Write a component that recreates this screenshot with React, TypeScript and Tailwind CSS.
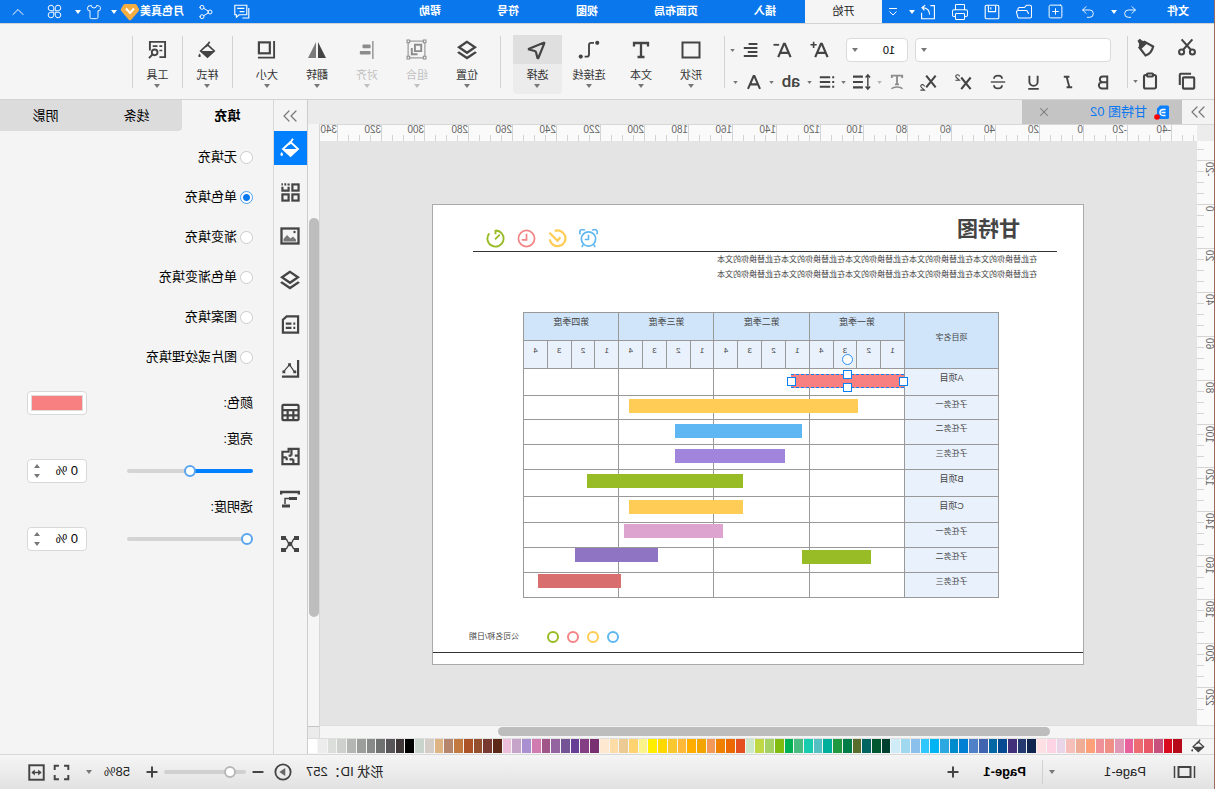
import type { ReactNode } from "react";
import {
  ChevronUp,
  ChevronsRight,
  Clipboard,
  FolderOpen,
  MousePointer2,
  Plus,
  Minus,
  Printer,
  Redo2,
  Share2,
  Shirt,
  SquarePlus,
  Undo2,
  X,
} from "lucide-react";

const palette = [
  "#b60a1a", "#d90a20", "#c8507c", "#e85866", "#ec6c72", "#e8609c", "#e098b4", "#ef8f86", "#f09098", "#ffa078",
  "#eead94", "#f6bfba", "#ead4e8", "#fdd4e4", "#fee0e4", "#102450", "#263a72", "#42307a", "#064a94", "#0468a4",
  "#4064b0", "#5080c8", "#0080d4", "#008ccc", "#2ca8e0", "#00b4f4", "#30c8fc", "#8cc0ec", "#a0d8f0", "#d0ecf8",
  "#004030", "#005830", "#006460", "#586c2c", "#007c48", "#209840", "#00ae9c", "#54c0c4", "#18ccb0", "#48bc80",
  "#00b054", "#80bc10", "#a4d064", "#c0d844", "#cce8c8", "#e45020", "#ec6800", "#f08000", "#f29858", "#f2a400",
  "#ffae00", "#ffb838", "#f9c830", "#ffd800", "#ffee00", "#fcf48a", "#ffd470", "#ecca94", "#fedca8", "#fee8d0",
  "#783070", "#843e84", "#663e96", "#745494", "#9464a0", "#a05688", "#d07cb0", "#aa90d0", "#c6a4ca", "#ecc0dc",
  "#5c2818", "#783a30", "#94502c", "#ac5428", "#c27a40", "#b6866c", "#deb484", "#d4ccc6", "#c8d4cc", "#000000",
  "#403838", "#585658", "#707272", "#888a8a", "#9c9e9c", "#b4b6b4", "#ced0ce", "#dcdedc", "#ececec", "#ffffff",
];

const quarters = ["第一季度", "第二季度", "第三季度", "第四季度"];

const tasks = [
  { name: "A项目", main: true, h: 27 },
  { name: "子任务一", main: false, h: 24 },
  { name: "子任务二", main: false, h: 25 },
  { name: "子任务三", main: false, h: 25 },
  { name: "B项目", main: true, h: 27 },
  { name: "C项目", main: true, h: 26 },
  { name: "子任务一", main: false, h: 25 },
  { name: "子任务二", main: false, h: 25 },
  { name: "子任务三", main: false, h: 25 },
];

// left / top / width are measured from the table's corner
const bars = [
  { left: 141, top: 87, width: 229, color: "#ffcc56" },
  { left: 197, top: 112, width: 127, color: "#5eb6f2" },
  { left: 214, top: 137, width: 110, color: "#a184dc" },
  { left: 256, top: 162, width: 156, color: "#98bc26" },
  { left: 256, top: 188, width: 114, color: "#ffcc56" },
  { left: 276, top: 212, width: 99, color: "#dca4ce" },
  { left: 128, top: 238, width: 69, color: "#98bc26" },
  { left: 341, top: 236, width: 83, color: "#8e74c2" },
  { left: 378, top: 262, width: 83, color: "#d86f6e" },
];

const fillModes = ["无填充", "单色填充", "渐变填充", "单色渐变填充", "图案填充", "图片或纹理填充"];

function Svg({ size = 20, children, className = "" }: { size?: number; children: ReactNode; className?: string }) {
  return (
    <svg width={size} height={size} viewBox="0 0 20 20" fill="none" stroke="currentColor" strokeWidth="2.3" className={className} aria-hidden="true">
      {children}
    </svg>
  );
}

function Caret({ className = "" }: { className?: string }) {
  return (
    <svg width="6" height="4" viewBox="0 0 6 4" className={`shrink-0 ${className}`} aria-hidden="true">
      <path d="M0 0h6L3 4z" fill="currentColor" />
    </svg>
  );
}

function Bucket({ size = 20 }: { size?: number }) {
  return (
    <Svg size={size}>
      <path d="M9.5 4 17 11l-7.500 7L2 11z" strokeWidth="1.900" />
      <path d="M2 11h15l-7.500 7z" fill="currentColor" stroke="none" />
      <path d="M7 .8l4 5.700" strokeWidth="1.900" />
      <path d="M18.300 14c1 1.500 1.300 1.900 1.300 2.600a1.300 1.300 0 0 1-2.600 0c0-.7.3-1.100 1.300-2.600z" fill="currentColor" stroke="none" />
    </Svg>
  );
}

function LayersIcon({ size = 20 }: { size?: number }) {
  return (
    <Svg size={size}>
      <path d="M10 1.800 18 7.300 10 12.800 2 7.300z" />
      <path d="M2.800 12 2 12.700l8 5.300 8-5.300-.8-.7" />
    </Svg>
  );
}

function TitleButton({ label, className, children }: { label: string; className: string; children: ReactNode }) {
  return (
    <button aria-label={label} className={`flex h-full items-center justify-center ${className}`}>
      {children}
    </button>
  );
}

function TitleBar() {
  return (
    <header className="flex h-[23px] shrink-0 items-center bg-[#0a77ec] text-[11px] text-white">
      <button className="w-[72px] font-bold">文件</button>
      <TitleButton label="撤销" className="w-6"><Undo2 size={16} strokeWidth={1.4} /></TitleButton>
      <TitleButton label="撤销历史" className="w-2"><Caret /></TitleButton>
      <TitleButton label="重做" className="ml-1.5 w-8"><Redo2 size={16} strokeWidth={1.4} /></TitleButton>
      <TitleButton label="新建" className="w-8"><SquarePlus size={17} strokeWidth={1.4} /></TitleButton>
      <TitleButton label="打开" className="w-8"><FolderOpen size={18} strokeWidth={1.4} /></TitleButton>
      <TitleButton label="保存" className="w-8">
        <Svg size={16}>
          <rect x="1.500" y="1.500" width="17" height="17" rx="1.500" strokeWidth="1.400" />
          <path d="M5.500 2v7.500h9V2M11.500 4v3" strokeWidth="1.400" />
        </Svg>
      </TitleButton>
      <TitleButton label="打印" className="w-8"><Printer size={18} strokeWidth={1.4} /></TitleButton>
      <TitleButton label="导出" className="w-8">
        <Svg size={16}>
          <path d="M7 2H2v16.500h16V11" strokeWidth="1.400" />
          <path d="M8 13c0-5 3-8 9-8.500M13.500 1.500 17.500 4.500 14.500 8" strokeWidth="1.400" />
        </Svg>
      </TitleButton>
      <TitleButton label="导出选项" className="-ml-1 w-2"><Caret /></TitleButton>
      <TitleButton label="自定义快速访问" className="w-[26px] pl-1">
        <Svg size={10}>
          <path d="M2 3h16M3 9l7 7 7-7" strokeWidth="2" />
        </Svg>
      </TitleButton>
      <nav className="flex h-full">
        <button className="w-[77px] bg-[#f5f5f5] text-[#222]">开始</button>
        <button className="w-20 font-bold">插入</button>
        <button className="w-[98px] font-bold">页面布局</button>
        <button className="w-20 font-bold">视图</button>
        <button className="w-[78px] font-bold">符号</button>
        <button className="w-[78px] font-bold">帮助</button>
      </nav>
      <div className="ml-auto flex h-full items-center">
        <TitleButton label="评论" className="w-9">
          <Svg size={16}>
            <path d="M4 1.500h15v12H17v3l-3.500-3H4zM7 5.500h9M7 9.500h6" strokeWidth="1.400" />
            <path d="M1.500 5v12.500h8" strokeWidth="1.400" />
          </Svg>
        </TitleButton>
        <TitleButton label="分享" className="w-9"><Share2 size={16} strokeWidth={1.4} /></TitleButton>
        <span className="pl-1 font-bold">月色真美</span>
        <svg width="20" height="18" viewBox="0 0 20 18" aria-hidden="true">
          <path d="M5 1h10a2 2 0 0 1 1.600.8L19 6a2 2 0 0 1-.2 2L11.500 16.500a2 2 0 0 1-3 0L1.200 8A2 2 0 0 1 1 6l2.400-4.200A2 2 0 0 1 5 1z" fill="#f4ad42" />
          <path d="M6 5.500 10 10l4-4.500" fill="none" stroke="#fff" strokeWidth="2" />
        </svg>
        <TitleButton label="账户菜单" className="ml-0.5 w-2"><Caret /></TitleButton>
        <TitleButton label="皮肤" className="ml-1 w-6"><Shirt size={16} strokeWidth={1.4} /></TitleButton>
        <TitleButton label="皮肤选项" className="w-2"><Caret /></TitleButton>
        <TitleButton label="应用" className="w-[38px]">
          <Svg size={15}>
            <path d="M9 9H5a3.700 3.700 0 1 1 4-4zM11 9V5a3.700 3.700 0 1 1 4 4zM9 11v4a3.700 3.700 0 1 1-4-4zM11 11h4a3.700 3.700 0 1 1-4 4z" strokeWidth="1.300" />
          </Svg>
        </TitleButton>
        <TitleButton label="收起功能区" className="w-9"><ChevronUp size={20} strokeWidth={1.2} /></TitleButton>
      </div>
    </header>
  );
}

function Divider() {
  return <div className="mt-3 h-[52px] w-px shrink-0 bg-[#d2d2d2]" />;
}

function IconButton({ label, className, children }: { label: string; className: string; children: ReactNode }) {
  return (
    <button aria-label={label} title={label} className={`flex h-full shrink-0 items-center justify-center ${className}`}>
      {children}
    </button>
  );
}

function RibbonTool({ label, width = "w-[50px]", active, disabled, children }: { label: string; width?: string; active?: boolean; disabled?: boolean; children: ReactNode }) {
  return (
    <button
      disabled={disabled}
      className={`mt-[11px] flex h-[59px] shrink-0 flex-col items-center rounded-sm text-[11px] leading-4 ${width} ${active ? "bg-[#ececec]" : ""} ${disabled ? "text-[#c0c0c0]" : "text-[#333]"}`}
    >
      <span className={`flex h-[29px] w-full items-center justify-center ${active ? "bg-[#dfdfdf]" : ""} ${disabled ? "text-[#8c8c8c]" : "text-[#444]"}`}>{children}</span>
      <span className="mt-[3px]">{label}</span>
      <Caret className={disabled ? "mt-px text-[#c0c0c0]" : "mt-px text-[#777]"} />
    </button>
  );
}

function Ribbon() {
  return (
    <div className="flex h-[77px] shrink-0 items-start border-y border-[#d2d2d2] bg-[#f5f5f5] text-[#444]">
      <div className="w-[86px] pt-1.5">
        <div className="flex h-[34px]">
          <IconButton label="剪切" className="w-[54px]">
            <Svg size={18}>
              <circle cx="4" cy="15.500" r="2.800" />
              <circle cx="16" cy="15.500" r="2.800" />
              <path d="M5.500 13.300 16 1.500M14.500 13.300 4 1.500" />
            </Svg>
          </IconButton>
          <IconButton label="格式刷" className="w-[26px]">
            <Svg size={19}>
              <path d="M3 9 12 4l5.500 6L11 18.500C6.500 17 4 13.500 3 9z" />
              <path d="M9 5.500 12.500 3.200l2-.2L17 .8 19.500 3l-1.700 3 .2 2.500-2.500 3z" fill="currentColor" stroke="none" />
            </Svg>
          </IconButton>
        </div>
        <div className="flex h-[34px]">
          <IconButton label="复制" className="w-[54px]">
            <Svg size={18}>
              <rect x="2" y="6" width="12.500" height="12.500" rx="1" />
              <path d="M5.500 2H17a1 1 0 0 1 1 1v11.500" />
            </Svg>
          </IconButton>
          <IconButton label="粘贴" className="w-5"><Clipboard size={18} strokeWidth={2.8} /></IconButton>
          <IconButton label="粘贴选项" className="w-2 text-[#777]"><Caret className="h-[3px] w-[5px]" /></IconButton>
        </div>
      </div>
      <Divider />

      <div className="w-[402px] pt-2.5">
        <div className="flex h-8 items-center">
          <div className="relative ml-4 w-[196px]">
            <select aria-label="字体" className="block h-6 w-full appearance-none rounded-sm border border-[#dadada] bg-white" />
            <Caret className="pointer-events-none absolute top-[10px] right-1.5 text-[#777]" />
          </div>
          <div className="relative mr-[7px] ml-[7px] w-[62px]">
            <select aria-label="字号" defaultValue="10" className="block h-6 w-full appearance-none rounded-sm border border-[#dadada] bg-white pl-3 text-[11px] text-black">
              <option>10</option>
            </select>
            <Caret className="pointer-events-none absolute top-[10px] right-1.5 text-[#777]" />
          </div>
          <IconButton label="增大字号" className="w-[38px]">
            <Svg size={19}>
              <path d="M1.500 17 7.500 3h1L14.500 17M4 12.500h8" />
              <path d="M13 4h6.500M16.200 .8v6.500" strokeWidth="1.700" />
            </Svg>
          </IconButton>
          <IconButton label="减小字号" className="w-9">
            <Svg size={19}>
              <path d="M1.500 17 7.500 3h1L14.500 17M4 12.500h8" />
              <path d="M13.500 4h6" strokeWidth="1.900" />
            </Svg>
          </IconButton>
          <IconButton label="对齐文本" className="w-7">
            <Svg size={16}>
              <path d="M2 2.500h11M2 7.500h17M2 12.500h12M2 17.500h17" strokeWidth="2.400" />
            </Svg>
          </IconButton>
          <IconButton label="对齐选项" className="w-2 text-[#777]"><Caret className="h-[3px] w-[5px]" /></IconButton>
        </div>
        <div className="flex h-8 items-center pl-1.5 text-[17px]">
          <IconButton label="粗体" className="w-[35px]">
            <Svg size={15}>
              <path d="M5 2h6a3.800 3.800 0 0 1 0 7.600H5zM5 9.600h7a4.200 4.200 0 0 1 0 8.400H5z" strokeWidth="2.600" />
            </Svg>
          </IconButton>
          <IconButton label="斜体" className="w-[35px]">
            <Svg size={14}>
              <path d="M8 2.500h8M4 17.500h8M12 2.500 8 17.500" strokeWidth="2.700" />
            </Svg>
          </IconButton>
          <IconButton label="下划线" className="w-[35px]">
            <Svg size={15}>
              <path d="M4.500 1v8a5.500 5.500 0 0 0 11 0V1M3 18.500h14" strokeWidth="2.500" />
            </Svg>
          </IconButton>
          <IconButton label="删除线" className="w-[35px]">
            <Svg size={16}>
              <path d="M15 6c0-2.500-2-4-5-4S5 3.500 5 6M5 14c0 2.500 2 4 5 4s5-1.500 5-4" />
              <path d="M1 10h18" strokeWidth="1.700" />
            </Svg>
          </IconButton>
          <IconButton label="上标" className="w-[35px]">
            <Svg size={18}>
              <path d="M1.500 5 12 18M12 5 1.500 18" />
              <path d="M14 4c0-3 4.500-2.500 4 0-.2 1-2 2-4 4h4.500" strokeWidth="1.200" />
            </Svg>
          </IconButton>
          <IconButton label="下标" className="w-[35px]">
            <Svg size={18}>
              <path d="M1.500 3 12 16M12 3 1.500 16" />
              <path d="M14 15c0-3 4.500-2.500 4 0-.2 1-2 2-4 4h4.500" strokeWidth="1.200" />
            </Svg>
          </IconButton>
          <IconButton label="文本路径" className="w-7 text-[#8c8c8c]">
            <Svg size={16}>
              <path d="M3.500 5V2h13v3M10 2v11M7.500 13h5" />
              <path d="M3 18.500c3-3 11-3 14 0" strokeWidth="1.700" />
            </Svg>
          </IconButton>
          <IconButton label="文本路径选项" className="w-1.5 text-[#b4b4b4]"><Caret className="h-[3px] w-[5px]" /></IconButton>
          <IconButton label="行距" className="w-[30px]">
            <Svg size={18}>
              <path d="M9 4h11M9 10h11M9 16h11" />
              <path d="M3.500 2v16M1 5l2.500-3L6 5M1 15l2.500 3L6 15" strokeWidth="1.600" />
            </Svg>
          </IconButton>
          <IconButton label="行距选项" className="w-1.5 text-[#777]"><Caret className="h-[3px] w-[5px]" /></IconButton>
          <IconButton label="项目符号" className="w-7">
            <Svg size={16}>
              <path d="M6 4h13M6 10h13M6 16h13" strokeWidth="2.400" />
              <path d="M1 4h2.500M1 10h2.500M1 16h2.500" strokeWidth="2.400" />
            </Svg>
          </IconButton>
          <IconButton label="项目符号选项" className="w-1.5 text-[#777]"><Caret className="h-[3px] w-[5px]" /></IconButton>
          <IconButton label="文本突出显示" className="w-8 font-['Roboto',sans-serif] font-medium">ab</IconButton>
          <IconButton label="突出显示选项" className="w-1.5 text-[#777]"><Caret className="h-[3px] w-[5px]" /></IconButton>
          <IconButton label="字体颜色" className="w-[30px]">
            <Svg size={16}>
              <path d="M2.500 18.500 9.500 2.500h1l7 16M5.500 13h9" strokeWidth="2.600" />
            </Svg>
          </IconButton>
          <IconButton label="字体颜色选项" className="w-1.5 text-[#777]"><Caret className="h-[3px] w-[5px]" /></IconButton>
        </div>
      </div>
      <Divider />

      <div className="flex w-[223px] pl-2">
        <RibbonTool label="形状">
          <Svg><rect x="1.500" y="2.500" width="17" height="15" strokeWidth="2" /></Svg>
        </RibbonTool>
        <RibbonTool label="文本">
          <Svg><path d="M3 6.500V3h14v3.500M10 3v14M6.500 17h7" /></Svg>
        </RibbonTool>
        <RibbonTool label="连接线" width="w-[54px]">
          <Svg size={22}>
            <circle cx="2.500" cy="3.500" r="1.900" fill="currentColor" stroke="none" />
            <circle cx="17.500" cy="16" r="1.900" fill="currentColor" stroke="none" />
            <path d="M5.500 3.500H8a2 2 0 0 1 2 2V14a2 2 0 0 0 2 2h2" strokeWidth="1.700" />
          </Svg>
        </RibbonTool>
        <RibbonTool label="选择" width="w-[49px]" active>
          <MousePointer2 size={22} strokeWidth={2.4} />
        </RibbonTool>
      </div>
      <Divider />

      <div className="flex w-[267px] pl-2">
        <RibbonTool label="位置"><LayersIcon /></RibbonTool>
        <RibbonTool label="组合" disabled>
          <Svg size={21}>
            <rect x="2" y="2" width="16" height="16" strokeWidth="1" />
            <path d="M1 1h2.500v2.500H1zM16.500 1H19v2.500h-2.500zM1 16.500h2.500V19H1zM16.500 16.500H19V19h-2.500z" strokeWidth="1" fill="#f5f5f5" />
            <path d="M8.500 5.500h6v6h-6zM5.500 8.500v6H11" strokeWidth="1.800" className="origin-center -scale-x-100" />
          </Svg>
        </RibbonTool>
        <RibbonTool label="对齐" disabled>
          <Svg size={18}>
            <path d="M3.500 0v20" strokeWidth="1.500" />
            <rect x="6" y="4" width="9" height="4" rx="1" fill="currentColor" stroke="none" />
            <rect x="6" y="11" width="12" height="4" rx="1" fill="currentColor" stroke="none" />
          </Svg>
        </RibbonTool>
        <RibbonTool label="翻转">
          <Svg>
            <path d="M9 2v16H1z" fill="currentColor" stroke="none" />
            <path d="M11 2v16h8z" fill="#7a7a7a" stroke="none" />
          </Svg>
        </RibbonTool>
        <RibbonTool label="大小">
          <Svg size={19}>
            <path d="M2 1v17.500h17" strokeWidth="2" />
            <rect x="6.500" y="2.500" width="11.500" height="11.500" />
          </Svg>
        </RibbonTool>
      </div>
      <Divider />
      <RibbonTool label="样式" width="w-[49px]"><Bucket size={18} /></RibbonTool>
      <Divider />
      <RibbonTool label="工具" width="w-[49px]">
        <Svg size={19}>
          <path d="M8 18H2V2h16v9" strokeWidth="2" />
          <path d="M5 6.500h3M10 6.500h5M5 11h3" strokeWidth="1.700" />
          <circle cx="13" cy="13" r="3" strokeWidth="2" />
          <path d="M15 15l4 4" strokeWidth="2" />
        </Svg>
      </RibbonTool>
      <Divider />
    </div>
  );
}

// 20 units of the drawing take 44px on both rulers
const PX_PER_UNIT = 2.195;

function HorizontalRuler() {
  const ticks = Array.from({ length: 79 }, (_, i) => (i - 10) * 5);
  return (
    <svg className="h-[17px] w-full bg-[#fafafa] font-['Liberation_Sans',sans-serif]" aria-hidden="true">
      {ticks.map((v) => {
        const x = Math.round(113 + v * PX_PER_UNIT);
        const major = v % 20 === 0;
        return (
          <g key={v}>
            <rect x={x} y={major ? 0 : 10} width="1" height={major ? 17 : 7} fill="#d4d4d4" />
            {major && <text x={x + 1} y="8" fontSize="10" fill="#666">{v}</text>}
          </g>
        );
      })}
    </svg>
  );
}

function VerticalRuler() {
  const ticks = Array.from({ length: 52 }, (_, i) => (i - 5) * 5);
  return (
    <svg className="block h-full w-[17px] shrink-0 bg-[#fafafa] font-['Liberation_Sans',sans-serif]" aria-hidden="true">
      {ticks.map((v) => {
        const y = Math.round(63 + v * PX_PER_UNIT);
        const major = v % 20 === 0;
        return (
          <g key={v}>
            <rect x={major ? 0 : 10} y={y} width={major ? 17 : 7} height="1" fill="#d4d4d4" />
            {major && (
              <text transform={`translate(8 ${y + 2}) rotate(-90)`} textAnchor="end" fontSize="10" fill="#666">{v}</text>
            )}
          </g>
        );
      })}
    </svg>
  );
}

function GanttTable() {
  return (
    <div className="relative w-[476px]">
      <table className="w-full table-fixed border-collapse border border-[#a4a4a4] text-center text-[#444]">
        <colgroup>
          <col className="w-[94px]" />
          {Array.from({ length: 16 }, (_, i) => <col key={i} />)}
        </colgroup>
        <thead>
          <tr className="h-7 bg-[#d0e5fa]">
            <th rowSpan={2} className="border border-[#999] p-0 pb-1.5 text-[8px] leading-3 font-normal">项目名字</th>
            {quarters.map((q) => (
              <th key={q} colSpan={4} className="border border-[#999] p-0 pt-[3px] align-top text-[9px] leading-3 font-normal">{q}</th>
            ))}
          </tr>
          <tr className="h-7 bg-[#e9f1fc]">
            {Array.from({ length: 16 }, (_, i) => (
              <th key={i} className="border border-[#999] p-0 pt-1 align-top text-[8px] leading-3 font-normal">{(i % 4) + 1}</th>
            ))}
          </tr>
        </thead>
        <tbody>
          {tasks.map((t, i) => (
            <tr key={i} style={{ height: t.h }}>
              <th className={`border border-[#999] bg-[#e9f1fc] p-0 pt-[3px] align-top leading-3 font-normal ${t.main ? "text-[9px]" : "text-[8px]"}`}>{t.name}</th>
              {quarters.map((q) => <td key={q} colSpan={4} className="border border-[#999] p-0" />)}
            </tr>
          ))}
        </tbody>
      </table>
      {bars.map((b, i) => (
        <div key={i} className="absolute h-3.5" style={{ left: b.left, top: b.top, width: b.width, background: b.color }} />
      ))}
      {/* selected bar with its resize and rotate handles */}
      <div className="absolute top-[62px] left-[95px] h-3.5 w-[113px] border-y border-dashed border-[#0a80f5] bg-[#f88080]">
        <i className="absolute -top-[21px] left-[51px] size-[11px] rounded-full border border-[#2a8ff5] bg-white" />
        <i className="absolute -top-[5px] left-[52px] size-[9px] border border-[#0a80f5] bg-white" />
        <i className="absolute top-2 left-[52px] size-[9px] border border-[#0a80f5] bg-white" />
        <i className="absolute top-0.5 -left-1 size-[9px] border border-[#0a80f5] bg-white" />
        <i className="absolute top-0.5 -right-1 size-[9px] border border-[#0a80f5] bg-white" />
      </div>
    </div>
  );
}

function Page() {
  return (
    <div className="absolute top-[63px] left-[113px] flex h-[461px] w-[652px] flex-col border border-[#aaa] bg-white text-[#444]">
      <div className="mr-10 ml-[26px] flex h-[47px] items-end justify-between border-b border-[#333] pr-[13px] pl-[37px]">
        <h1 className="mb-2 text-[21px] leading-7 font-bold">甘特图</h1>
        <div className="mb-[3px] flex gap-3">
          <Svg size={19} className="text-[#5eb6f2]">
            <circle cx="10" cy="10.500" r="7.500" strokeWidth="1.800" />
            <path d="M10 6v5h4M1.500 5.500a3 3 0 0 1 4.500-4M18.500 5.500a3 3 0 0 0-4.500-4M4.500 16.500 3 19M15.500 16.500 17 19" strokeWidth="1.700" />
          </Svg>
          <Svg size={19} className="text-[#ffcc56]">
            <path d="M13 2A8.300 8.300 0 1 0 18.200 11" strokeWidth="2.400" />
            <path d="M7 8.500 10 12.500 18.500 4" strokeWidth="2.400" />
          </Svg>
          <Svg size={19} className="text-[#f48484]">
            <circle cx="10" cy="10" r="8.500" strokeWidth="1.800" />
            <path d="M10 5v6.500h5" strokeWidth="1.800" />
          </Svg>
          <Svg size={19} className="text-[#98bc26]">
            <path d="M10 1v4.500M10 1.500A8.500 8.500 0 1 0 16.500 4.500M10.500 11 5.500 6" strokeWidth="2" />
          </Svg>
        </div>
      </div>
      <div className="ml-[46px] text-[8px] leading-[15px]">
        <p>在此替换你的文本在此替换你的文本在此替换你的文本在此替换你的文本在此替换你的文本</p>
        <p>在此替换你的文本在此替换你的文本在此替换你的文本在此替换你的文本在此替换你的文本</p>
      </div>
      <div className="mt-[30px] ml-[84px]">
        <GanttTable />
      </div>
      <div className="mt-auto mb-[11px] flex h-7 items-center justify-end border-b border-[#333] pr-9 pb-1 text-[8px]">
        <div className="mr-7 flex gap-2">
          <i className="size-3 rounded-full border-2 border-[#5eb6f2]" />
          <i className="size-3 rounded-full border-2 border-[#ffcc56]" />
          <i className="size-3 rounded-full border-2 border-[#f48484]" />
          <i className="size-3 rounded-full border-2 border-[#98bc26]" />
        </div>
        公司名称/日期
      </div>
    </div>
  );
}

function Workspace() {
  return (
    <main className="flex min-w-0 flex-1 flex-col">
      <div className="flex h-6 shrink-0 items-center bg-[#ebebeb]">
        <button aria-label="展开符号库" className="flex h-full w-8 items-center justify-center bg-[#f3f3f3] text-[#777]">
          <ChevronsRight size={24} strokeWidth={1.2} />
        </button>
        <div className="flex h-full w-40 items-center bg-[#c4c4c4] pl-[13px]">
          <svg width="15" height="15" viewBox="0 0 15 15" aria-hidden="true">
            <path d="M0 2a1.500 1.500 0 0 1 1.500-1.500H9L12 3.500V13a1 1 0 0 1-1 1H1.500A1.500 1.500 0 0 1 0 12.500z" fill="#0a80ff" />
            <path d="M3.500 4.500h2.500a2.800 2.800 0 0 1 0 6H3.500M3.500 7.500h4" fill="none" stroke="#fff" strokeWidth="1.400" />
            <circle cx="12" cy="12" r="2.800" fill="#f00" />
          </svg>
          <span className="ml-[7px] text-[13px] whitespace-nowrap text-[#0a78f0]">甘特图 02</span>
          <button aria-label="关闭" className="mr-[15px] ml-auto text-[#777]"><X size={14} strokeWidth={1.8} /></button>
        </div>
      </div>
      <div className="flex min-h-0 flex-1">
        <div className="flex shrink-0 flex-col border-t border-[#d8d8d8]">
          <div className="h-4 w-[17px] shrink-0 bg-[#ececec]" />
          <div className="min-h-0 flex-1 overflow-hidden"><VerticalRuler /></div>
          <div className="h-[13px] shrink-0 border-t border-[#dedede] bg-[#f5f5f5]" />
        </div>
        <div className="flex min-w-0 flex-1 flex-col border-t border-[#d8d8d8]">
          <HorizontalRuler />
          <div className="relative -mt-px min-h-0 flex-1 overflow-hidden bg-[#e4e4e4]">
            <Page />
          </div>
          <div className="h-[13px] shrink-0 border-t border-[#dedede] bg-[#f5f5f5] pt-px pl-[147px]">
            <div className="h-[9px] w-[552px] rounded-full bg-[#bdbdbd]" />
          </div>
        </div>
        <div className="flex w-3 shrink-0 flex-col border-l border-[#d8d8d8] bg-[#f5f5f5] pt-[94px]">
          <div className="h-[399px] w-[10px] rounded-full bg-[#bdbdbd]" />
          <div className="mt-auto h-3 border-t border-[#c4c4c4] bg-[#ebebeb]" />
        </div>
      </div>
      <div className="flex h-4 shrink-0 items-start border-t border-[#dedede] bg-[#f5f5f5] text-[#444]">
        <button aria-label="填充颜色" className="flex w-8 justify-center"><Bucket size={14} /></button>
        <div className="flex h-3.5 flex-1 gap-px pr-px">
          {palette.map((c) => (
            <button key={c} aria-label={c} className="flex-1" style={{ background: c }} />
          ))}
        </div>
      </div>
    </main>
  );
}

const strip: { label: string; icon: ReactNode }[] = [
  { label: "填充", icon: <Bucket size={20} /> },
  {
    label: "符号库",
    icon: (
      <Svg size={19}>
        <rect x="1.500" y="1.500" width="6.500" height="6.500" />
        <path d="M12 4v4h6.500V4M12 .5v2M14.500 1.500h2M18 1.500h1.500" />
        <rect x="1.500" y="12" width="6.500" height="6.500" />
        <rect x="12" y="12" width="6.500" height="6.500" />
      </Svg>
    ),
  },
  {
    label: "图片",
    icon: (
      <Svg size={20}>
        <rect x="1.500" y="2.500" width="17" height="15" />
        <path d="M4 15.500v-2l3-3 2.500 2L13 9l3.500 4v2.500z" fill="#777" stroke="none" />
        <circle cx="5.500" cy="6" r="1.200" fill="currentColor" stroke="none" />
      </Svg>
    ),
  },
  { label: "图层", icon: <LayersIcon size={20} /> },
  {
    label: "页面",
    icon: (
      <Svg size={19}>
        <path d="M2 1.500h12L18 5v13.500H2z" />
        <path d="M5 9h2M9 9h6M5 13.500h2M9 13.500h6" />
      </Svg>
    ),
  },
  {
    label: "图表",
    icon: (
      <Svg size={19}>
        <path d="M2 1v17.500h17" />
        <path d="M5.500 14 11 6l6.500 7.500" strokeWidth="1.300" />
        <path d="M4 12h3v3H4zM9.500 4.500h3v3h-3zM15.500 12h3v3h-3z" fill="currentColor" stroke="none" />
      </Svg>
    ),
  },
  {
    label: "表格",
    icon: (
      <Svg size={19}>
        <rect x="1.500" y="2" width="17" height="16" rx="1" />
        <path d="M1.500 7.500h17M1.500 13h17M7 7.500V18M13 7.500V18" />
      </Svg>
    ),
  },
  {
    label: "平面图",
    icon: (
      <Svg size={19}>
        <path d="M1.500 2H12v3h6.500v13h-17zM1.500 9h4M9 2v7M9 9h3M7 13v5M7 13h4M14 11h4.500M14 11v3" />
      </Svg>
    ),
  },
  {
    label: "甘特图",
    icon: (
      <Svg size={20}>
        <path d="M1 4.500V2h18v2.500" strokeWidth="2.600" />
        <path d="M3 8.500h8M10 16h8" strokeWidth="3.200" />
        <path d="M11 8.500h4V14" strokeWidth="1.500" />
      </Svg>
    ),
  },
  {
    label: "思维导图",
    icon: (
      <Svg size={20}>
        <path d="M1 4h5M14 4h5M1 16h5M14 16h5" strokeWidth="4" />
        <path d="M5 4.500c3 0 2 5.500 5 5.500s2-5.500 5-5.500M5 15.500c3 0 2-5.500 5-5.500s2 5.500 5 5.500" strokeWidth="1.400" />
        <circle cx="10" cy="10" r="2.300" fill="currentColor" stroke="none" />
      </Svg>
    ),
  },
];

function PercentBox({ label }: { label: string }) {
  return (
    <div className="flex h-6 w-[60px] items-center rounded-sm border border-[#d8d8d8] bg-white">
      <input aria-label={label} defaultValue="0 %" className="w-0 flex-1 pl-2 text-[13px] outline-none" />
      <div className="mr-1.5 flex flex-col gap-1.5 text-[#777]">
        <button aria-label={`增加${label}`}><Caret className="block rotate-180" /></button>
        <button aria-label={`减少${label}`}><Caret className="block" /></button>
      </div>
    </div>
  );
}

function PropertySlider({ id, label, value }: { id: string; label: string; value: number }) {
  return (
    <>
      <label htmlFor={id} className="mt-3.5 block h-5">{label}:</label>
      <div className="mt-2.5 flex items-center justify-between">
        <input
          id={id}
          type="range"
          defaultValue={value}
          className="h-1 w-[126px] appearance-none rounded-full [&::-webkit-slider-thumb]:size-3 [&::-webkit-slider-thumb]:appearance-none [&::-webkit-slider-thumb]:rounded-full [&::-webkit-slider-thumb]:border-2 [&::-webkit-slider-thumb]:border-[#5aa5f0] [&::-webkit-slider-thumb]:bg-white"
          style={{ background: `linear-gradient(to right, #0080ff ${value}%, #d4d4d4 ${value}%)` }}
        />
        <PercentBox label={label} />
      </div>
    </>
  );
}

function Sidebar() {
  return (
    <aside className="flex w-[308px] shrink-0 border-l border-[#ccc] bg-[#f4f4f4]">
      <div className="flex w-[33px] shrink-0 flex-col">
        <button aria-label="收起面板" className="flex h-[31px] items-center justify-center text-[#777]">
          <ChevronsRight size={24} strokeWidth={1.2} />
        </button>
        <div className="flex flex-col gap-2.5 text-[#444]">
          {strip.map((s, i) => (
            <button key={s.label} aria-label={s.label} className={`flex h-[34px] items-center justify-center ${i === 0 ? "bg-[#0080ff] text-white" : ""}`}>
              {s.icon}
            </button>
          ))}
        </div>
      </div>
      <div className="flex flex-1 flex-col border-l border-[#d8d8d8] text-[13px] text-black">
        <div className="flex h-[31px] text-[13px]">
          <button className="flex-1 font-bold">填充</button>
          <button className="flex-1 rounded-bl bg-[#dcdcdc]">线条</button>
          <button className="flex-1 bg-[#dcdcdc]">阴影</button>
        </div>
        <fieldset className="mt-4 ml-5 flex flex-col gap-5">
          {fillModes.map((m, i) => (
            <label key={m} className="flex h-5 items-center gap-[3px]">
              <input
                type="radio"
                name="fill"
                defaultChecked={i === 1}
                className="size-[13px] appearance-none rounded-full border border-[#ccc] bg-white checked:border-[#4a9cf0] checked:bg-[radial-gradient(circle,#0a78f0_3px,#fff_4px)]"
              />
              {m}
            </label>
          ))}
        </fieldset>
        <div className="mt-6 mr-[27px] ml-5 leading-5">
          <div className="flex h-6 items-center justify-between">
            <label htmlFor="fill-color">颜色:</label>
            <button id="fill-color" className="h-6 w-[60px] rounded-sm border border-[#d8d8d8] bg-white p-[3px]">
              <span className="block h-full border border-[#ddd] bg-[#f88080]" />
            </button>
          </div>
          <PropertySlider id="lightness" label="亮度" value={50} />
          <PropertySlider id="opacity" label="透明度" value={0} />
        </div>
      </div>
    </aside>
  );
}

function StatusBar() {
  return (
    <footer className="flex h-[35px] shrink-0 items-center border-t border-[#d8d8d8] bg-linear-to-b from-[#f5f5f5] to-[#e2e2e2] text-[13px] text-[#222]">
      <button aria-label="页面视图" className="ml-[18px] text-[#444]">
        <svg width="23" height="14" viewBox="0 0 23 14" fill="none" stroke="currentColor" aria-hidden="true">
          <path d="M1.500 1v12M21.500 1v12" strokeWidth="1.500" />
          <rect x="5.500" y="2" width="12" height="10" strokeWidth="2" />
        </svg>
      </button>
      <div className="relative ml-[27px]">
        <select aria-label="页面" className="w-[97px] appearance-none bg-transparent">
          <option>Page-1</option>
        </select>
        <Caret className="pointer-events-none absolute top-2 right-0 text-[#777]" />
      </div>
      <div className="ml-1.5 h-6 w-px bg-[#d0d0d0]" />
      <button className="ml-4 font-bold text-black">Page-1</button>
      <button aria-label="添加页面" className="ml-[22px] text-[#444]"><Plus size={16} strokeWidth={3} /></button>
      <div className="ml-auto flex items-center">
        <span>形状 ID：257</span>
        <button aria-label="演示" className="ml-3.5 text-[#444]">
          <Svg size={18}>
            <circle cx="10" cy="10" r="8.500" strokeWidth="2" />
            <path d="M7.500 5.500 14 10l-6.500 4.500z" fill="#666" stroke="none" />
          </Svg>
        </button>
        <button aria-label="缩小" className="ml-2 text-[#444]"><Minus size={16} strokeWidth={3} /></button>
        <input
          aria-label="缩放"
          type="range"
          defaultValue={14}
          className="ml-1 h-1 w-[82px] appearance-none rounded-full bg-[#d0d0d0] [&::-webkit-slider-thumb]:size-3 [&::-webkit-slider-thumb]:appearance-none [&::-webkit-slider-thumb]:rounded-full [&::-webkit-slider-thumb]:border-2 [&::-webkit-slider-thumb]:border-[#b8b8b8] [&::-webkit-slider-thumb]:bg-white"
        />
        <button aria-label="放大" className="ml-1 text-[#444]"><Plus size={16} strokeWidth={3} /></button>
        <button className="ml-3.5 flex items-center gap-3 text-[#222]">
          58%
          <Caret className="text-[#777]" />
        </button>
        <button aria-label="全屏" className="ml-4 text-[#444]">
          <Svg size={17}>
            <path d="M2 7V2h5M13 2h5v5M18 13v5h-5M7 18H2v-5" />
          </Svg>
        </button>
        <button aria-label="适合宽度" className="mr-7 ml-2 text-[#444]">
          <Svg size={17}>
            <rect x="1.500" y="1.500" width="17" height="17" />
            <path d="M5 10h10" strokeWidth="1.700" />
            <path d="M8 6.500v7L4 10zM12 6.500v7l4-3.500z" fill="currentColor" stroke="none" />
          </Svg>
        </button>
      </div>
    </footer>
  );
}

export default function App() {
  return (
    <div className="flex h-screen w-full -scale-x-100 flex-col overflow-hidden border-l border-[#9c6a5c] bg-[#f4f4f4] font-['Liberation_Sans','Noto_Sans_CJK_SC',sans-serif]">
      <TitleBar />
      <Ribbon />
      <div className="flex min-h-0 flex-1">
        <Workspace />
        <Sidebar />
      </div>
      <StatusBar />
    </div>
  );
}
